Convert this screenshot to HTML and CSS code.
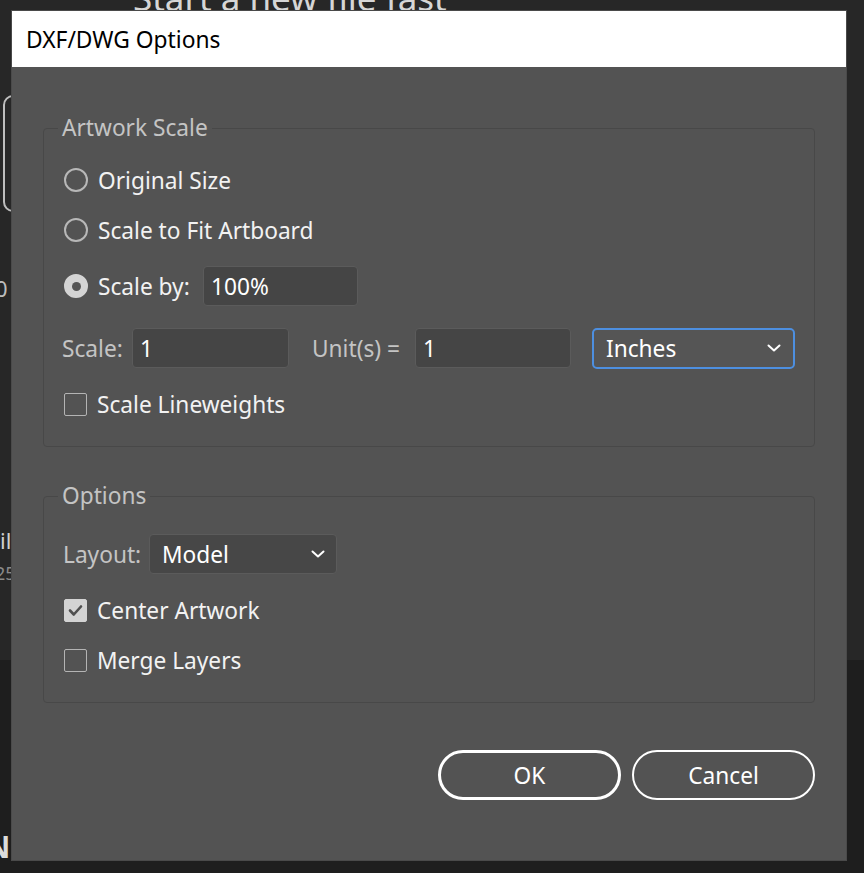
FILE: index.html
```html
<!DOCTYPE html>
<html lang="en">
<head>
<meta charset="utf-8">
<title>DXF/DWG Options</title>
<link rel="stylesheet" href="styles.css">
</head>
<body>
<div class="app">
  <div class="app-top">
    <h1 class="app-heading">Start a new file fast</h1>
    <div class="app-card"></div>
    <div class="app-num">0</div>
    <div class="app-file">il</div>
    <div class="app-meta">25</div>
  </div>
  <div class="app-bottom"><span class="app-glyph">N</span></div>
</div>

<div class="dialog" role="dialog" aria-label="DXF/DWG Options">
  <header class="dialog-title">DXF/DWG Options</header>
  <div class="dialog-body">
    <fieldset class="group group-scale">
      <legend>Artwork Scale</legend>
      <div class="row row-50">
        <span class="radio"></span><span class="label">Original Size</span>
      </div>
      <div class="row row-50">
        <span class="radio"></span><span class="label">Scale to Fit Artboard</span>
      </div>
      <div class="row row-62">
        <span class="radio radio-on"></span><span class="label label-scaleby">Scale by:</span>
        <span class="field field-pct">100%</span>
      </div>
      <div class="row row-62">
        <span class="sublabel sublabel-scale">Scale:</span>
        <span class="field field-num">1</span>
        <span class="sublabel sublabel-units">Unit(s) =</span>
        <span class="field field-num field-units">1</span>
        <span class="select select-focus">
          <span class="select-text">Inches</span>
          <svg class="chevron" width="14" height="8" viewBox="0 0 14 8"><path d="M1.5 1.5 L7 6.5 L12.5 1.5" fill="none" stroke="#ffffff" stroke-width="2" stroke-linecap="round" stroke-linejoin="round"/></svg>
        </span>
      </div>
      <div class="row row-50">
        <span class="check"></span><span class="label">Scale Lineweights</span>
      </div>
    </fieldset>

    <fieldset class="group group-options">
      <legend>Options</legend>
      <div class="row row-56">
        <span class="sublabel sublabel-layout">Layout:</span>
        <span class="select select-layout">
          <span class="select-text">Model</span>
          <svg class="chevron" width="14" height="8" viewBox="0 0 14 8"><path d="M1.5 1.5 L7 6.5 L12.5 1.5" fill="none" stroke="#ffffff" stroke-width="2" stroke-linecap="round" stroke-linejoin="round"/></svg>
        </span>
      </div>
      <div class="row row-56">
        <span class="check check-on">
          <svg width="23" height="23" viewBox="0 0 23 23"><path d="M6 11.5 L9.8 15.5 L17 7.5" fill="none" stroke="#4f4f4f" stroke-width="2.6" stroke-linecap="round" stroke-linejoin="round"/></svg>
        </span>
        <span class="label">Center Artwork</span>
      </div>
      <div class="row row-44">
        <span class="check"></span><span class="label">Merge Layers</span>
      </div>
    </fieldset>

    <div class="actions">
      <button class="btn btn-primary" type="button">OK</button>
      <button class="btn" type="button">Cancel</button>
    </div>
  </div>
</div>
</body>
</html>
```

FILE: styles.css
```css
html, body {
  margin: 0;
  padding: 0;
}

body {
  width: 864px;
  height: 873px;
  position: relative;
  overflow: hidden;
  background: #262626;
  font-family: "Noto Sans", "DejaVu Sans", sans-serif;
}

/* ---------- background application ---------- */
.app {
  display: flex;
  flex-direction: column;
  height: 873px;
}

.app-top {
  flex: 0 0 660px;
  background: #272727;
  overflow: hidden;
  display: flex;
  flex-direction: column;
  align-items: flex-start;
}

.app-heading {
  margin: -24px 0 0 133px;
  font-size: 35px;
  line-height: 44px;
  font-weight: 400;
  color: #d6d6d6;
  white-space: nowrap;
}

.app-card {
  margin: 75px 0 0 3px;
  width: 60px;
  height: 117px;
  box-sizing: border-box;
  border: 2px solid #bdbdbd;
  border-radius: 10px;
}

.app-num {
  margin: 61px 0 0 -5px;
  font-size: 22px;
  line-height: 30px;
  color: #bdbdbd;
}

.app-file {
  margin: 222px 0 0 0;
  font-size: 22px;
  line-height: 30px;
  color: #d0d0d0;
}

.app-meta {
  margin: 6px 0 0 -5px;
  font-size: 18px;
  line-height: 24px;
  color: #8a8a8a;
}

.app-bottom {
  flex: 1;
  background: #1e1e1e;
  padding-top: 170px;
  overflow: hidden;
}

.app-glyph {
  display: inline-block;
  margin-left: -14px;
  font-size: 30px;
  line-height: 34px;
  font-weight: 700;
  color: #dcdcdc;
}

/* ---------- dialog ---------- */
.dialog {
  position: absolute;
  left: 12px;
  top: 11px;
  width: 834px;
  height: 849px;
  background: #535353;
  display: flex;
  flex-direction: column;
  box-shadow: 0 0 0 1px #4a4a4a;
}

.dialog-title {
  height: 56px;
  flex: 0 0 56px;
  background: #ffffff;
  color: #000000;
  font-size: 22.8px;
  display: flex;
  align-items: center;
  padding-left: 14px;
  box-sizing: border-box;
}

.dialog-body {
  padding: 46px 31px 0 31px;
  display: flex;
  flex-direction: column;
}

.group {
  margin: 0;
  border: 1px solid #484848;
  border-radius: 4px;
  padding: 12px 18px 17px 20px;
  min-width: 0;
}

.group legend {
  padding: 0 4px;
  margin-left: -6px;
  font-size: 22.7px;
  line-height: 30px;
  color: #c4c4c4;
}

.group-options {
  margin-top: 34px;
  padding-top: 15px;
  padding-bottom: 20px;
}

.row {
  display: flex;
  align-items: center;
}

.row-44 { height: 44px; }
.row-50 { height: 50px; }
.row-56 { height: 56px; }
.row-62 { height: 62px; }

.label {
  margin-left: 10px;
  font-size: 22.7px;
  color: #f2f2f2;
  white-space: nowrap;
}

.label-scaleby {
  width: 105px;
  flex: 0 0 105px;
}

.sublabel {
  font-size: 22.7px;
  color: #c4c4c4;
  white-space: nowrap;
}

.sublabel-scale {
  margin-left: -2px;
  width: 70px;
  flex: 0 0 70px;
}

.sublabel-units {
  margin-left: 23px;
  width: 103px;
  flex: 0 0 103px;
}

.sublabel-layout {
  margin-left: -1px;
  width: 86px;
  flex: 0 0 86px;
}

/* radio */
.radio {
  width: 24px;
  height: 24px;
  flex: 0 0 24px;
  box-sizing: border-box;
  border: 2px solid #b8b8b8;
  border-radius: 50%;
  display: flex;
  align-items: center;
  justify-content: center;
}

.radio-on {
  background: #d4d4d4;
  border-color: #d4d4d4;
}

.radio-on::after {
  content: "";
  width: 9px;
  height: 9px;
  border-radius: 50%;
  background: #555555;
}

/* checkbox */
.check {
  width: 23px;
  height: 23px;
  flex: 0 0 23px;
  box-sizing: border-box;
  border: 1.5px solid #b4b4b4;
  border-radius: 2px;
  display: flex;
  align-items: center;
  justify-content: center;
}

.check-on {
  background: #d3d3d3;
  border-color: #d3d3d3;
}

.check-on svg {
  flex: 0 0 auto;
  margin: -1.5px;
}

/* fields */
.field {
  height: 40px;
  box-sizing: border-box;
  background: #454545;
  border: 1px solid #5b5b5b;
  border-radius: 4px;
  color: #ffffff;
  font-size: 22.7px;
  display: flex;
  align-items: center;
  padding-left: 7px;
}

.field-pct {
  width: 155px;
  flex: 0 0 155px;
}

.field-num {
  width: 157px;
  flex: 0 0 157px;
}

.field-units {
  width: 156px;
  flex: 0 0 156px;
}

.select {
  box-sizing: border-box;
  display: flex;
  align-items: center;
  justify-content: space-between;
  color: #ffffff;
  font-size: 22.7px;
}

.select-focus {
  margin-left: 21px;
  width: 203px;
  flex: 0 0 203px;
  height: 41px;
  border: 2px solid #4d8fe0;
  border-radius: 5px;
  background: #555555;
  padding: 0 12px 0 12px;
}

.select-layout {
  width: 188px;
  flex: 0 0 188px;
  height: 40px;
  background: #474747;
  border: 1px solid #5b5b5b;
  border-radius: 4px;
  padding: 0 11px 0 12px;
}

.chevron {
  flex: 0 0 auto;
}

/* buttons */
.actions {
  margin-top: 47px;
  display: flex;
  justify-content: flex-end;
  gap: 11px;
}

.btn {
  width: 183px;
  height: 50px;
  box-sizing: border-box;
  border: 2px solid #ffffff;
  border-radius: 25px;
  background: transparent;
  color: #ffffff;
  font-family: "Noto Sans", "DejaVu Sans", sans-serif;
  font-size: 22.7px;
  padding: 0;
  cursor: pointer;
}

.btn-primary {
  border-width: 3px;
}
```
